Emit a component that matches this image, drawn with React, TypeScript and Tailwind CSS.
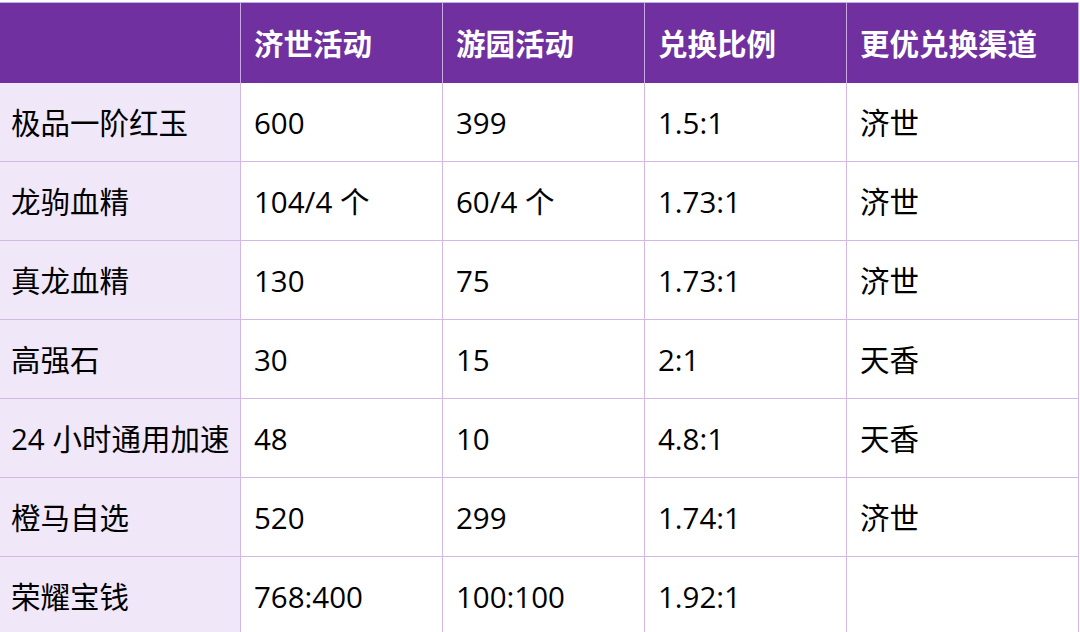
import React from "react";

const header = ["", "济世活动", "游园活动", "兑换比例", "更优兑换渠道"];
const rows = [
  ["极品一阶红玉", "600", "399", "1.5:1", "济世"],
  ["龙驹血精", "104/4 个", "60/4 个", "1.73:1", "济世"],
  ["真龙血精", "130", "75", "1.73:1", "济世"],
  ["高强石", "30", "15", "2:1", "天香"],
  ["24 小时通用加速", "48", "10", "4.8:1", "天香"],
  ["橙马自选", "520", "299", "1.74:1", "济世"],
  ["荣耀宝钱", "768:400", "100:100", "1.92:1", ""],
];

const widths = ["w-[241px]", "w-[202px]", "w-[202px]", "w-[202px]", "w-[232px]"];

export default function App() {
  return (
    <div
      className="w-[1080px] h-[632px] overflow-hidden bg-white pt-[2px]"
      style={{ fontFamily: '"Open Sans", "Noto Sans CJK SC", sans-serif' }}
    >
      <div className="flex w-[1079px] border-t border-[#c9a9e2]">
        {header.map((h, i) => (
          <div
            key={i}
            className={`${widths[i]} h-[80px] shrink-0 bg-[#7030a0] border-r border-[#c9a9e2] flex items-center pl-[13px] pt-[2px] text-white font-bold text-[29.5px] leading-none`}
          >
            {h}
          </div>
        ))}
      </div>
      {rows.map((r, ri) => (
        <div key={ri} className="flex w-[1079px]">
          {r.map((c, ci) => (
            <div
              key={ci}
              className={`${widths[ci]} h-[79px] shrink-0 border-r border-b border-[#d2b8e6] flex items-center pt-[2px] ${
                ci === 0 ? "bg-[#f0e7f8] pl-[11px]" : "bg-white pl-[13px]"
              } text-black text-[29.5px] leading-none whitespace-nowrap`}
            >
              {c}
            </div>
          ))}
        </div>
      ))}
    </div>
  );
}
